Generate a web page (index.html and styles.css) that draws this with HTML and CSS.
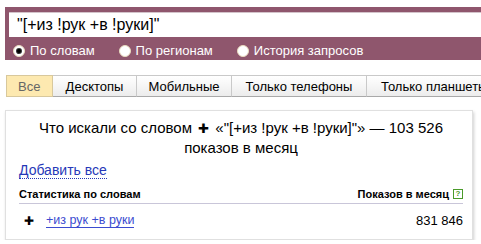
FILE: index.html
```html
<!DOCTYPE html>
<html lang="ru">
<head>
  <meta charset="UTF-8">
  <title>Подбор слов</title>
  <link rel="stylesheet" href="styles.css">
</head>
<body>

  <div class="search">
    <input class="search-input" type="text" value='"[+из !рук +в !руки]"'>
    <div class="modes">
      <label class="mode"><span class="radio checked"></span>По словам</label>
      <label class="mode"><span class="radio"></span>По регионам</label>
      <label class="mode"><span class="radio"></span>История запросов</label>
    </div>
  </div>

  <div class="tabs">
    <span class="tab active">Все</span>
    <span class="tab tab-desk">Десктопы</span>
    <span class="tab tab-mob">Мобильные</span>
    <span class="tab tab-phone">Только телефоны</span>
    <span class="tab">Только планшеты</span>
  </div>

  <div class="card">
    <div class="title">
      Что искали со словом <span class="plus">✚</span> «"[+из !рук +в !руки]"» — 103 526<br>
      показов в месяц
    </div>
    <a class="add-all" href="#">Добавить все</a>
    <div class="stats-head">
      <span>Статистика по словам</span>
      <span>Показов в месяц <span class="help">?</span></span>
    </div>
    <div class="stats-row">
      <span class="plus small">✚</span>
      <a class="phrase" href="#">+из рук +в руки</a>
      <span class="count">831 846</span>
    </div>
  </div>

</body>
</html>
```

FILE: styles.css
```css
* { box-sizing: border-box; }

body {
  margin: 0;
  padding: 7px 0 0 5px;
  font-family: Arial, "Liberation Sans", sans-serif;
  background: #fff;
  color: #000;
  overflow: hidden;
  width: 481px;
}

.search {
  background: #8f566d;
  padding: 5px 0 3px 4px;
  height: 53px;
}

.search-input {
  display: block;
  width: 100%;
  height: 25px;
  border: none;
  border-top: 1px solid #d3c3ca;
  padding: 0 0 0 8px;
  font-family: inherit;
  font-size: 16px;
  color: #000;
  outline: none;
}

.modes {
  display: flex;
  margin-top: 6px;
  padding-left: 4px;
}

.mode {
  display: flex;
  align-items: center;
  color: #fff;
  font-size: 13px;
  margin-right: 24px;
}

.radio {
  width: 12px;
  height: 12px;
  border-radius: 50%;
  background: #fff;
  border: 1px solid #eadcc0;
  margin-right: 5px;
  position: relative;
}

.radio.checked::after {
  content: "";
  position: absolute;
  left: 3px;
  top: 3px;
  width: 4px;
  height: 4px;
  border-radius: 50%;
  background: #000;
  box-shadow: 0 0 0 1px #333;
}

.tabs {
  display: flex;
  margin-top: 15px;
  margin-left: 1px;
  white-space: nowrap;
  overflow: hidden;
}

.tab {
  flex: none;
  height: 22px;
  line-height: 21px;
  font-size: 13px;
  padding: 0 14px;
  border: 1px solid #c9c9c9;
  border-left: none;
  border-bottom-color: #a9a9a9;
  background: linear-gradient(#fff, #ececec);
}

.tab.active {
  width: 47px;
  border-left: 1px solid #d8c89c;
  border-color: #d8c89c;
  background: #fde9b0;
  color: #666;
  padding: 0 0 0 11px;
}

.tab-desk { width: 84px; text-align: center; padding: 0; }
.tab-mob { width: 95px; text-align: center; padding: 0; }
.tab-phone { width: 135px; text-align: center; padding: 0; }

.card {
  margin-top: 13px;
  width: 468px;
  height: 130px;
  border: 1px solid #e0e0e0;
  box-shadow: 1px 2px 3px #cfcfcf;
  padding: 7px 9px 0 13px;
}

.title {
  text-align: center;
  font-size: 15px;
  line-height: 19px;
  color: #000;
}

.plus {
  font-size: 13px;
  margin: 0 2px;
}

.add-all {
  display: inline-block;
  margin-top: 6px;
  font-size: 14px;
  color: #2638b8;
  text-decoration: none;
  border-bottom: 1px dotted #2638b8;
  line-height: 15px;
}

.stats-head {
  display: flex;
  justify-content: space-between;
  align-items: center;
  margin-top: 9px;
  padding-bottom: 3px;
  font-size: 11px;
  font-weight: bold;
  border-bottom: 1px solid #c9c6d9;
}

.help {
  display: inline-block;
  width: 10px;
  height: 10px;
  border: 1px solid #4a9a2a;
  color: #4a9a2a;
  font-size: 8px;
  line-height: 8px;
  text-align: center;
  font-weight: bold;
  margin-left: 1px;
  vertical-align: top;
  margin-top: 1px;
}

.stats-row {
  display: flex;
  align-items: center;
  margin-top: 9px;
  padding-left: 5px;
}

.plus.small {
  font-size: 12px;
  margin: 0;
  width: 22px;
}

.phrase {
  font-size: 12.5px;
  color: #3b4bd0;
  text-decoration: none;
  border-bottom: 1px solid #3b4bd0;
  line-height: 13px;
}

.count {
  margin-left: auto;
  font-size: 13px;
  padding-right: 0;
}
```
